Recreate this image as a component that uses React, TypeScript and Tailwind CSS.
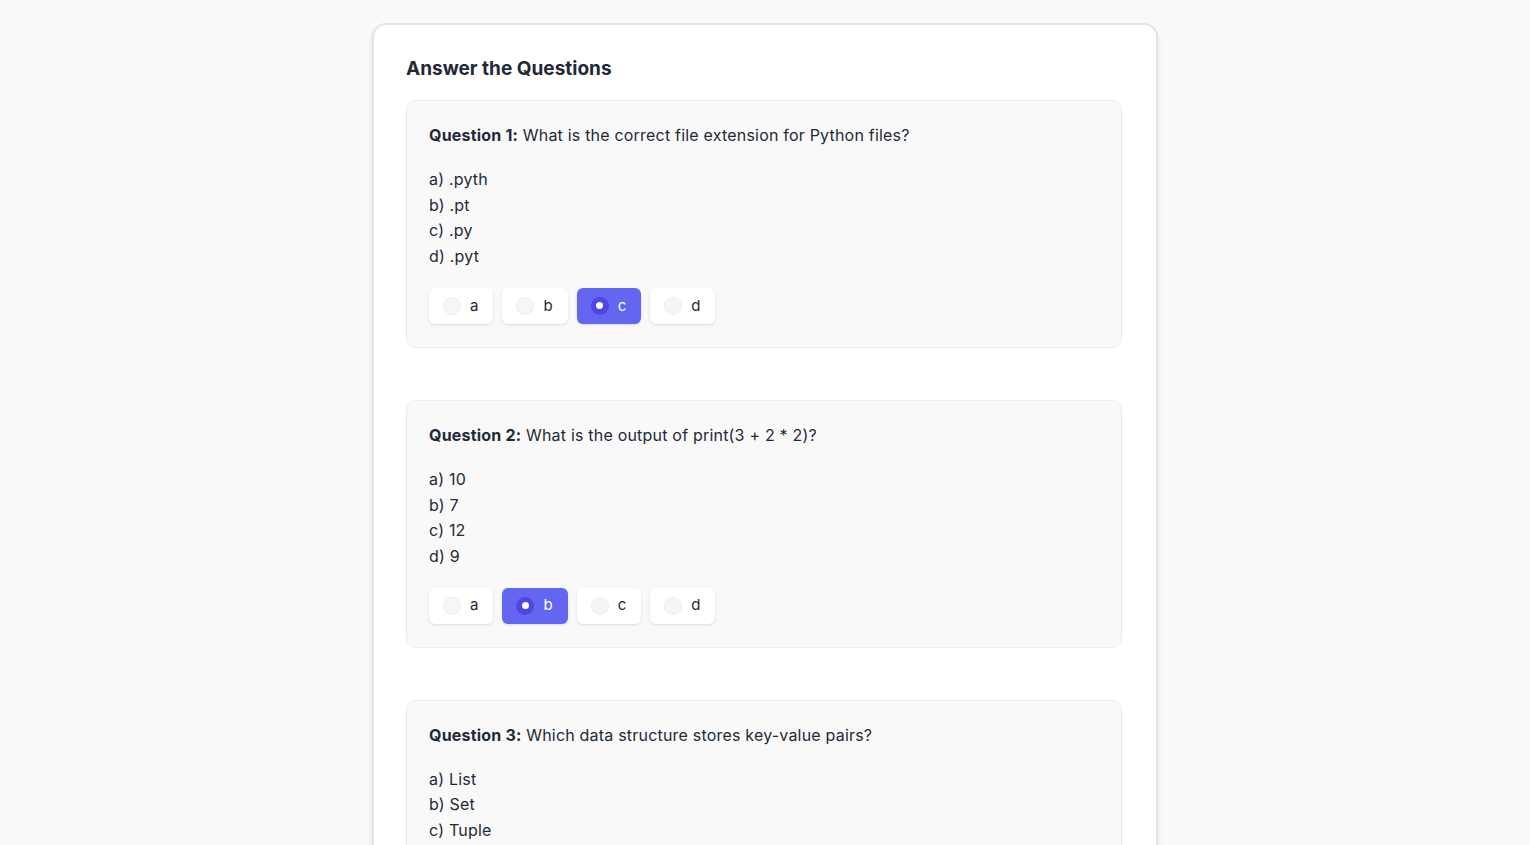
import React from "react";

type Question = {
  title: string;
  text: string;
  options: string[];
  picked: string;
};

const questions: Question[] = [
  {
    title: "Question 1:",
    text: "What is the correct file extension for Python files?",
    options: ["a) .pyth", "b) .pt", "c) .py", "d) .pyt"],
    picked: "c",
  },
  {
    title: "Question 2:",
    text: "What is the output of print(3 + 2 * 2)?",
    options: ["a) 10", "b) 7", "c) 12", "d) 9"],
    picked: "b",
  },
  {
    title: "Question 3:",
    text: "Which data structure stores key-value pairs?",
    options: ["a) List", "b) Set", "c) Tuple", "d) Dictionary"],
    picked: "",
  },
];

const Choice = ({ letter, active }: { letter: string; active: boolean }) => {
  return (
    <label
      className={
        active
          ? "flex h-9 items-center gap-[9px] rounded-md bg-[#6366f1] pl-[14px] pr-[15px] text-[15px] text-white shadow-sm"
          : "flex h-9 items-center gap-[9px] rounded-md bg-white pl-[14px] pr-[15px] text-[15px] text-[#1f2937] shadow-sm"
      }
    >
      {active ? (
        <span className="flex h-[18px] w-[18px] items-center justify-center rounded-full bg-[#4f46e5]">
          <span className="h-[7px] w-[7px] rounded-full bg-white" />
        </span>
      ) : (
        <span className="h-[18px] w-[18px] rounded-full border border-[#eceef1] bg-[#f5f6f8]" />
      )}
      <span>{letter}</span>
    </label>
  );
};

const QuestionCard = ({ q }: { q: Question }) => {
  return (
    <div className="rounded-[10px] border border-[#ececec] bg-[#f9f9f9] px-[22px] pt-[23px] pb-[23px]">
      <p className="text-[16px] leading-[22px] tracking-[0.2px] text-[#1f2937]">
        <span className="font-bold">{q.title}</span> {q.text}
      </p>
      <ul className="mt-[21px] text-[16px] leading-[25.7px] tracking-[0.2px] text-[#1f2937]">
        {q.options.map((o) => (
          <li key={o}>{o}</li>
        ))}
      </ul>
      <div className="mt-[18px] flex gap-[9px]">
        {["a", "b", "c", "d"].map((l) => (
          <Choice key={l} letter={l} active={q.picked === l} />
        ))}
      </div>
    </div>
  );
};

export default function App() {
  return (
    <div
      className="min-h-screen bg-[#f8f9fa] pt-[23px]"
      style={{ fontFamily: "Inter, 'Noto Sans', sans-serif" }}
    >
      <div className="mx-auto w-[786px] rounded-[14px] border-2 border-[#e4e4e4] bg-white pl-[32px] pr-[34px] pt-[30px] pb-10 shadow-md">
        <h1 className="mb-[17px] text-[19px] leading-[28px] font-bold text-[#1f2937]">
          Answer the Questions
        </h1>
        <div className="flex flex-col gap-[52px]">
          {questions.map((q) => (
            <QuestionCard key={q.title} q={q} />
          ))}
        </div>
      </div>
    </div>
  );
}
